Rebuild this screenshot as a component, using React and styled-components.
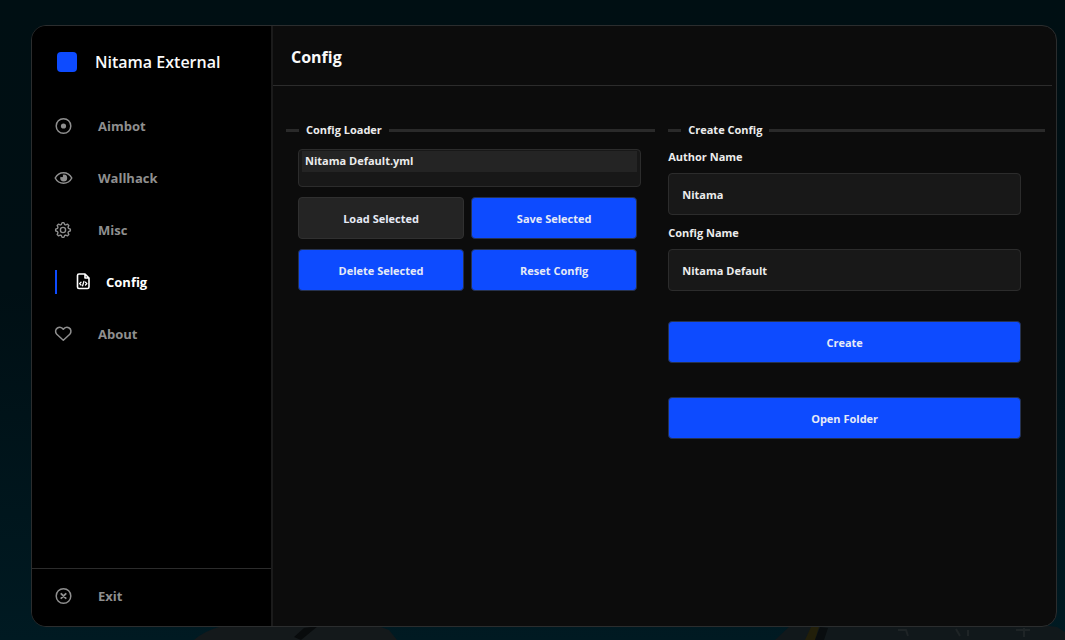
import React, { useState } from "react";
import styled, { createGlobalStyle, css } from "styled-components";

const GlobalStyle = createGlobalStyle`
  *, *::before, *::after { box-sizing: border-box; }
  body {
    margin: 0;
    background: #000f13;
    color: #ececec;
    font-family: "Open Sans", "Noto Sans", "Liberation Sans", sans-serif;
    font-size: 11px;
    font-weight: 700;
    line-height: 16px;
  }
  button, input { font: inherit; color: inherit; }
  h1, h2, p, ul { margin: 0; padding: 0; font-size: inherit; font-weight: inherit; }
`;

const Desktop = styled.div`
  position: relative;
  display: flex;
  min-height: 100vh;
  padding: 25px 8px 13px 31px;
  background: linear-gradient(180deg, #000f13 0%, #000f14 45%, #001a22 100%);
`;

const Scenery = styled.svg`
  position: absolute;
  left: 0;
  bottom: 0;
  width: 100%;
  height: 56px;
`;

const Window = styled.div`
  position: relative;
  display: flex;
  flex: 1;
  min-width: 0;
  overflow: hidden;
  border: 1px solid #2b2d2e;
  border-radius: 15px;
  background: #0c0c0c;
`;

const Sidebar = styled.aside`
  display: flex;
  flex-direction: column;
  flex: 0 0 241px;
  border-right: 2px solid #1b1b1b;
  background: #000;
`;

const Brand = styled.div`
  display: flex;
  align-items: center;
  gap: 18px;
  height: 72px;
  padding-left: 25px;
  color: #fafafa;
  font-size: 16px;
  font-weight: 600;
  line-height: 24px;
`;

const Logo = styled.span`
  width: 20px;
  height: 20px;
  border-radius: 4px;
  background: #0d4bff;
`;

const Nav = styled.nav`
  display: flex;
  flex-direction: column;
  flex: 1;
  padding-top: 2px;
`;

const NavItem = styled.button`
  display: flex;
  align-items: center;
  gap: 27px;
  width: 100%;
  height: 52px;
  padding: 0 0 0 23px;
  border: 0;
  background: none;
  color: #8f8f8f;
  font-size: 13px;
  line-height: 20px;
  text-align: left;
  cursor: pointer;

  ${(p) =>
    p.$active &&
    css`
      gap: 15px;
      color: #fff;

      &::before {
        content: "";
        width: 2px;
        height: 24px;
        margin-right: 3px;
        background: #0d4bff;
      }
    `}
`;

const Icon = styled.svg`
  flex: none;
  width: 16px;
  height: 16px;
  overflow: visible;
  fill: none;
  stroke: currentColor;
  stroke-width: 1.5;
  stroke-linecap: round;
  stroke-linejoin: round;
`;

const SidebarFooter = styled.div`
  height: 58px;
  padding-top: 1px;
  border-top: 1px solid #2c2c2c;
`;

const Main = styled.main`
  flex: 1;
  min-width: 0;
`;

const PageHeader = styled.header`
  height: 60px;
  margin-right: 4px;
  padding: 19px 0 0 18px;
  border-bottom: 1px solid #2c2c2c;
`;

const PageTitle = styled.h1`
  color: #fafafa;
  font-size: 16px;
  line-height: 24px;
`;

const Columns = styled.div`
  display: grid;
  grid-template-columns: 49fr 50fr;
  gap: 13px;
  padding: 36px 11px 24px 13px;
`;

const SectionTitle = styled.h2`
  display: flex;
  align-items: center;
  gap: 7px;
  height: 16px;
  white-space: nowrap;

  &::before,
  &::after {
    content: "";
    height: 3px;
    background: #2a2a2a;
  }
  &::before { width: 13px; }
  &::after { flex: 1; }
`;

const LoaderBody = styled.div`
  padding: 11px 14px 0 12px;
`;

const FileList = styled.ul`
  height: 38px;
  padding: 1px 3px;
  border: 1px solid #2c2c2c;
  border-radius: 4px;
  background: #181818;
  list-style: none;
`;

const FileOption = styled.button`
  display: block;
  width: 100%;
  height: 21px;
  padding: 0 3px 2px;
  border: 0;
  background: #242424;
  text-align: left;
`;

const ButtonGrid = styled.div`
  display: grid;
  grid-template-columns: 1fr 1fr;
  gap: 10px 7px;
  margin: 10px 4px 0 0;
`;

const Button = styled.button`
  height: 42px;
  padding: 2px 0 0;
  border: 1px solid ${(p) => (p.$muted ? "#303030" : "#26324f")};
  border-radius: 4px;
  background: ${(p) => (p.$muted ? "#242424" : "#0d4bff")};
  color: #e6eaf6;
  cursor: pointer;
`;

const Form = styled.form`
  display: flex;
  flex-direction: column;
  padding: 11px 24px 0 0;
`;

const Field = styled.label`
  display: flex;
  flex-direction: column;
  gap: 8px;
  margin-bottom: 10px;
`;

const TextInput = styled.input`
  width: 100%;
  height: 42px;
  padding: 0 13px;
  border: 1px solid #2c2c2c;
  border-radius: 4px;
  background: #181818;
  outline: 0;
`;

const Actions = styled.div`
  display: flex;
  flex-direction: column;
  gap: 34px;
  padding-top: 20px;
`;

const gearOutline =
  Array.from({ length: 8 }, (_, i) => {
    const point = (r, deg) => {
      const a = ((i * 45 + deg) * Math.PI) / 180;
      return `${(8 + r * Math.sin(a)).toFixed(2)} ${(8 - r * Math.cos(a)).toFixed(2)}`;
    };
    return `${i ? "L" : "M"}${point(5.7, -17)} L${point(7.4, -7)} L${point(7.4, 7)} L${point(5.7, 17)}`;
  }).join(" ") + " Z";

const icons = {
  Aimbot: (
    <>
      <circle cx="8.500" cy="8" r="7.300" />
      <circle cx="8.500" cy="8" r="2.600" fill="currentColor" stroke="none" />
    </>
  ),
  Wallhack: (
    <>
      <path d="M.2 8C3.900 .9 13.100 .9 16.800 8C13.100 15.100 3.900 15.100 .2 8Z" />
      <path
        fill="currentColor"
        stroke="none"
        d="M9 4.500A3.500 3.500 0 1 1 5.200 8Q5.300 7.200 5.700 6.800Q7.300 7.700 8 6.600Q8.200 5.600 7.700 4.700Z"
      />
    </>
  ),
  Misc: (
    <>
      <path strokeWidth="1.400" d={gearOutline} />
      <circle strokeWidth="1.400" cx="8" cy="8" r="2.600" />
    </>
  ),
  Config: (
    <>
      <path strokeWidth="1.600" d="M10 0H4Q2.500 0 2.500 1.500V13Q2.500 14.500 4 14.500H12.500Q14 14.500 14 13V4L10 0V4H14" />
      <path strokeWidth="1.300" d="M6 8.200L4.600 9.600L6 11M10.500 8.200L11.900 9.600L10.500 11M8.900 7.400L7.600 11.800" />
    </>
  ),
  About: (
    <path d="M8.300 14.300L1.800 8.200C-.2 6 .4 3.200 2.400 2C4.400 .8 7 1.300 8.300 3.300C9.600 1.300 12.200 .8 14.200 2C16.200 3.200 16.600 6 14.800 8.200Z" />
  ),
  Exit: (
    <>
      <circle cx="8.500" cy="8" r="7.300" />
      <path strokeWidth="1.900" d="M6.300 5.800L10.700 10.200M10.700 5.800L6.300 10.200" />
    </>
  ),
};

function NavButton({ name, active, onClick }) {
  return (
    <NavItem type="button" $active={active} aria-current={active ? "page" : undefined} onClick={onClick}>
      <Icon viewBox="0 0 16 16" aria-hidden="true">
        {icons[name]}
      </Icon>
      {name}
    </NavItem>
  );
}

function Background() {
  return (
    <Scenery viewBox="0 0 1065 56" preserveAspectRatio="none" aria-hidden="true">
      <path fill="#14191b" d="M194 56Q204 47 222 42H378L389 46L397 56Z" />
      <path fill="#080b0c" d="M294 53L304 44L318 42L301 56Z" />
      <path fill="#11181b" d="M775 56L790 42H1050L1057 43L1065 48V56Z" />
      <path fill="#221f0a" d="M805 56L811 43H819L815 56Z" />
      <path fill="#090d0f" d="M820 43L828 44L824 56H815Z" />
      <path stroke="#1e2426" strokeWidth="2" fill="none" d="M898 46L906 46L908 52M956 45L960 52M968 46V52M1016 46H1030M1024 44V53" />
    </Scenery>
  );
}

export default function App() {
  const [page, setPage] = useState("Config");
  const [author, setAuthor] = useState("Nitama");
  const [configName, setConfigName] = useState("Nitama Default");

  return (
    <>
      <GlobalStyle />
      <Desktop>
        <Background />
        <Window>
          <Sidebar>
            <Brand>
              <Logo />
              Nitama External
            </Brand>
            <Nav>
              {["Aimbot", "Wallhack", "Misc", "Config", "About"].map((name) => (
                <NavButton key={name} name={name} active={page === name} onClick={() => setPage(name)} />
              ))}
            </Nav>
            <SidebarFooter>
              <NavButton name="Exit" />
            </SidebarFooter>
          </Sidebar>
          <Main>
            <PageHeader>
              <PageTitle>Config</PageTitle>
            </PageHeader>
            <Columns>
              <section>
                <SectionTitle>Config Loader</SectionTitle>
                <LoaderBody>
                  <FileList aria-label="Config files">
                    <li>
                      <FileOption type="button" aria-pressed="true">
                        Nitama Default.yml
                      </FileOption>
                    </li>
                  </FileList>
                  <ButtonGrid>
                    <Button type="button" $muted>Load Selected</Button>
                    <Button type="button">Save Selected</Button>
                    <Button type="button">Delete Selected</Button>
                    <Button type="button">Reset Config</Button>
                  </ButtonGrid>
                </LoaderBody>
              </section>
              <section>
                <SectionTitle>Create Config</SectionTitle>
                <Form onSubmit={(e) => e.preventDefault()}>
                  <Field>
                    Author Name
                    <TextInput value={author} onChange={(e) => setAuthor(e.target.value)} />
                  </Field>
                  <Field>
                    Config Name
                    <TextInput value={configName} onChange={(e) => setConfigName(e.target.value)} />
                  </Field>
                  <Actions>
                    <Button type="submit">Create</Button>
                    <Button type="button">Open Folder</Button>
                  </Actions>
                </Form>
              </section>
            </Columns>
          </Main>
        </Window>
      </Desktop>
    </>
  );
}
